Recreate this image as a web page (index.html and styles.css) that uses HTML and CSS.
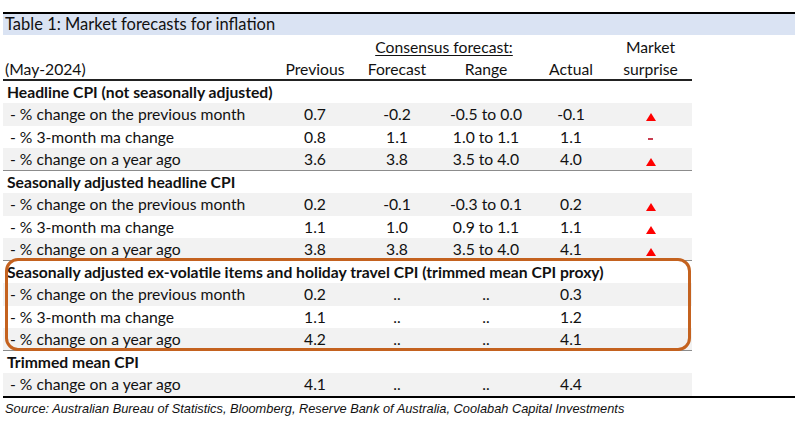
FILE: index.html
```html
<!DOCTYPE html>
<html>
<head>
<meta charset="utf-8">
<link rel="stylesheet" href="styles.css">
</head>
<body>
<div class="page">
  <div class="title">Table 1: Market forecasts for inflation</div>
  <div class="tbl">
    <div class="row head1">
      <div></div><div></div>
      <div class="span2"><span class="ul">Consensus forecast:</span></div>
      <div></div>
      <div class="c">Market</div>
    </div>
    <div class="row head2">
      <div class="lab0">(May-2024)</div>
      <div class="c">Previous</div>
      <div class="c">Forecast</div>
      <div class="c">Range</div>
      <div class="c">Actual</div>
      <div class="c">surprise</div>
    </div>

    <div class="group sep">
      <div class="row sec"><div class="lab1">Headline CPI (not seasonally adjusted)</div></div>
      <div class="row g"><div class="lab2">- % change on the previous month</div><div class="c">0.7</div><div class="c">-0.2</div><div class="c">-0.5 to 0.0</div><div class="c">-0.1</div><div class="c"><span class="tri"></span></div></div>
      <div class="row"><div class="lab2">- % 3-month ma change</div><div class="c">0.8</div><div class="c">1.1</div><div class="c">1.0 to 1.1</div><div class="c">1.1</div><div class="c"><span class="dash"></span></div></div>
      <div class="row g"><div class="lab2">- % change on a year ago</div><div class="c">3.6</div><div class="c">3.8</div><div class="c">3.5 to 4.0</div><div class="c">4.0</div><div class="c"><span class="tri"></span></div></div>
    </div>

    <div class="group sep">
      <div class="row sec"><div class="lab1">Seasonally adjusted headline CPI</div></div>
      <div class="row g"><div class="lab2">- % change on the previous month</div><div class="c">0.2</div><div class="c">-0.1</div><div class="c">-0.3 to 0.1</div><div class="c">0.2</div><div class="c"><span class="tri"></span></div></div>
      <div class="row"><div class="lab2">- % 3-month ma change</div><div class="c">1.1</div><div class="c">1.0</div><div class="c">0.9 to 1.1</div><div class="c">1.1</div><div class="c"><span class="tri"></span></div></div>
      <div class="row g"><div class="lab2">- % change on a year ago</div><div class="c">3.8</div><div class="c">3.8</div><div class="c">3.5 to 4.0</div><div class="c">4.1</div><div class="c"><span class="tri"></span></div></div>
    </div>

    <div class="group sep boxed">
      <div class="row sec"><div class="lab1 wide">Seasonally adjusted ex-volatile items and holiday travel CPI (trimmed mean CPI proxy)</div></div>
      <div class="row g"><div class="lab2">- % change on the previous month</div><div class="c">0.2</div><div class="c">..</div><div class="c">..</div><div class="c">0.3</div><div></div></div>
      <div class="row"><div class="lab2">- % 3-month ma change</div><div class="c">1.1</div><div class="c">..</div><div class="c">..</div><div class="c">1.2</div><div></div></div>
      <div class="row g"><div class="lab2">- % change on a year ago</div><div class="c">4.2</div><div class="c">..</div><div class="c">..</div><div class="c">4.1</div><div></div></div>
    </div>

    <div class="group">
      <div class="row sec"><div class="lab1">Trimmed mean CPI</div></div>
      <div class="row g"><div class="lab2">- % change on a year ago</div><div class="c">4.1</div><div class="c">..</div><div class="c">..</div><div class="c">4.4</div><div></div></div>
    </div>
  </div>
  <div class="bottom"></div>
  <div class="source">Source: Australian Bureau of Statistics, Bloomberg, Reserve Bank of Australia, Coolabah Capital Investments</div>
</div>
</body>
</html>
```

FILE: styles.css
```css
html, body {
  margin: 0;
  padding: 0;
  background: #ffffff;
}
body {
  font-family: Lato, "Open Sans", sans-serif;
  color: #111111;
}
.page {
  padding: 12px 4px 0 3px;
}
.title {
  border-top: 2px solid #000;
  background: #dae3f3;
  height: 21px;
  line-height: 21px;
  font-size: 16.5px;
  padding-left: 2px;
}
.tbl {
  width: 689px;
  font-size: 15.7px;
}
.row {
  display: grid;
  grid-template-columns: 272px 80px 84px 94px 76px 83px;
  height: 22.5px;
  line-height: 22.5px;
  white-space: nowrap;
}
.head1 {
  height: 23px;
  line-height: 25px;
}
.head2 {
  height: 20.5px;
  line-height: 22px;
  border-bottom: 2px solid #222;
}
.span2 {
  grid-column: span 2;
  text-align: center;
}
.ul {
  text-decoration: underline;
  text-underline-offset: 2px;
}
.c {
  text-align: center;
}
.g {
  background: #f2f2f2;
}
.lab0 { padding-left: 2px; }
.lab1 { padding-left: 4px; font-weight: 700; }
.lab1.wide { grid-column: span 6; }
.lab2 { padding-left: 7px; }
.sep > .row:last-child {
  box-shadow: inset 0 -1px 0 #8c8c8c;
}
.group { position: relative; }
.boxed::after {
  content: "";
  position: absolute;
  left: 2px;
  top: -3px;
  width: 680px;
  height: 87px;
  border: 3px solid #c4621f;
  border-radius: 13px;
  pointer-events: none;
}
.tri {
  display: inline-block;
  width: 0;
  height: 0;
  border-left: 5px solid transparent;
  border-right: 5px solid transparent;
  border-bottom: 8px solid #ff0000;
  vertical-align: -1px;
}
.dash {
  display: inline-block;
  width: 5px;
  height: 2px;
  background: #c83c50;
  vertical-align: 3px;
}
.bottom {
  border-top: 2.5px solid #000;
}
.source {
  font-family: "Liberation Sans", Arial, sans-serif;
  font-style: italic;
  font-size: 12.8px;
  padding-left: 2px;
  line-height: 22px;
}
```
